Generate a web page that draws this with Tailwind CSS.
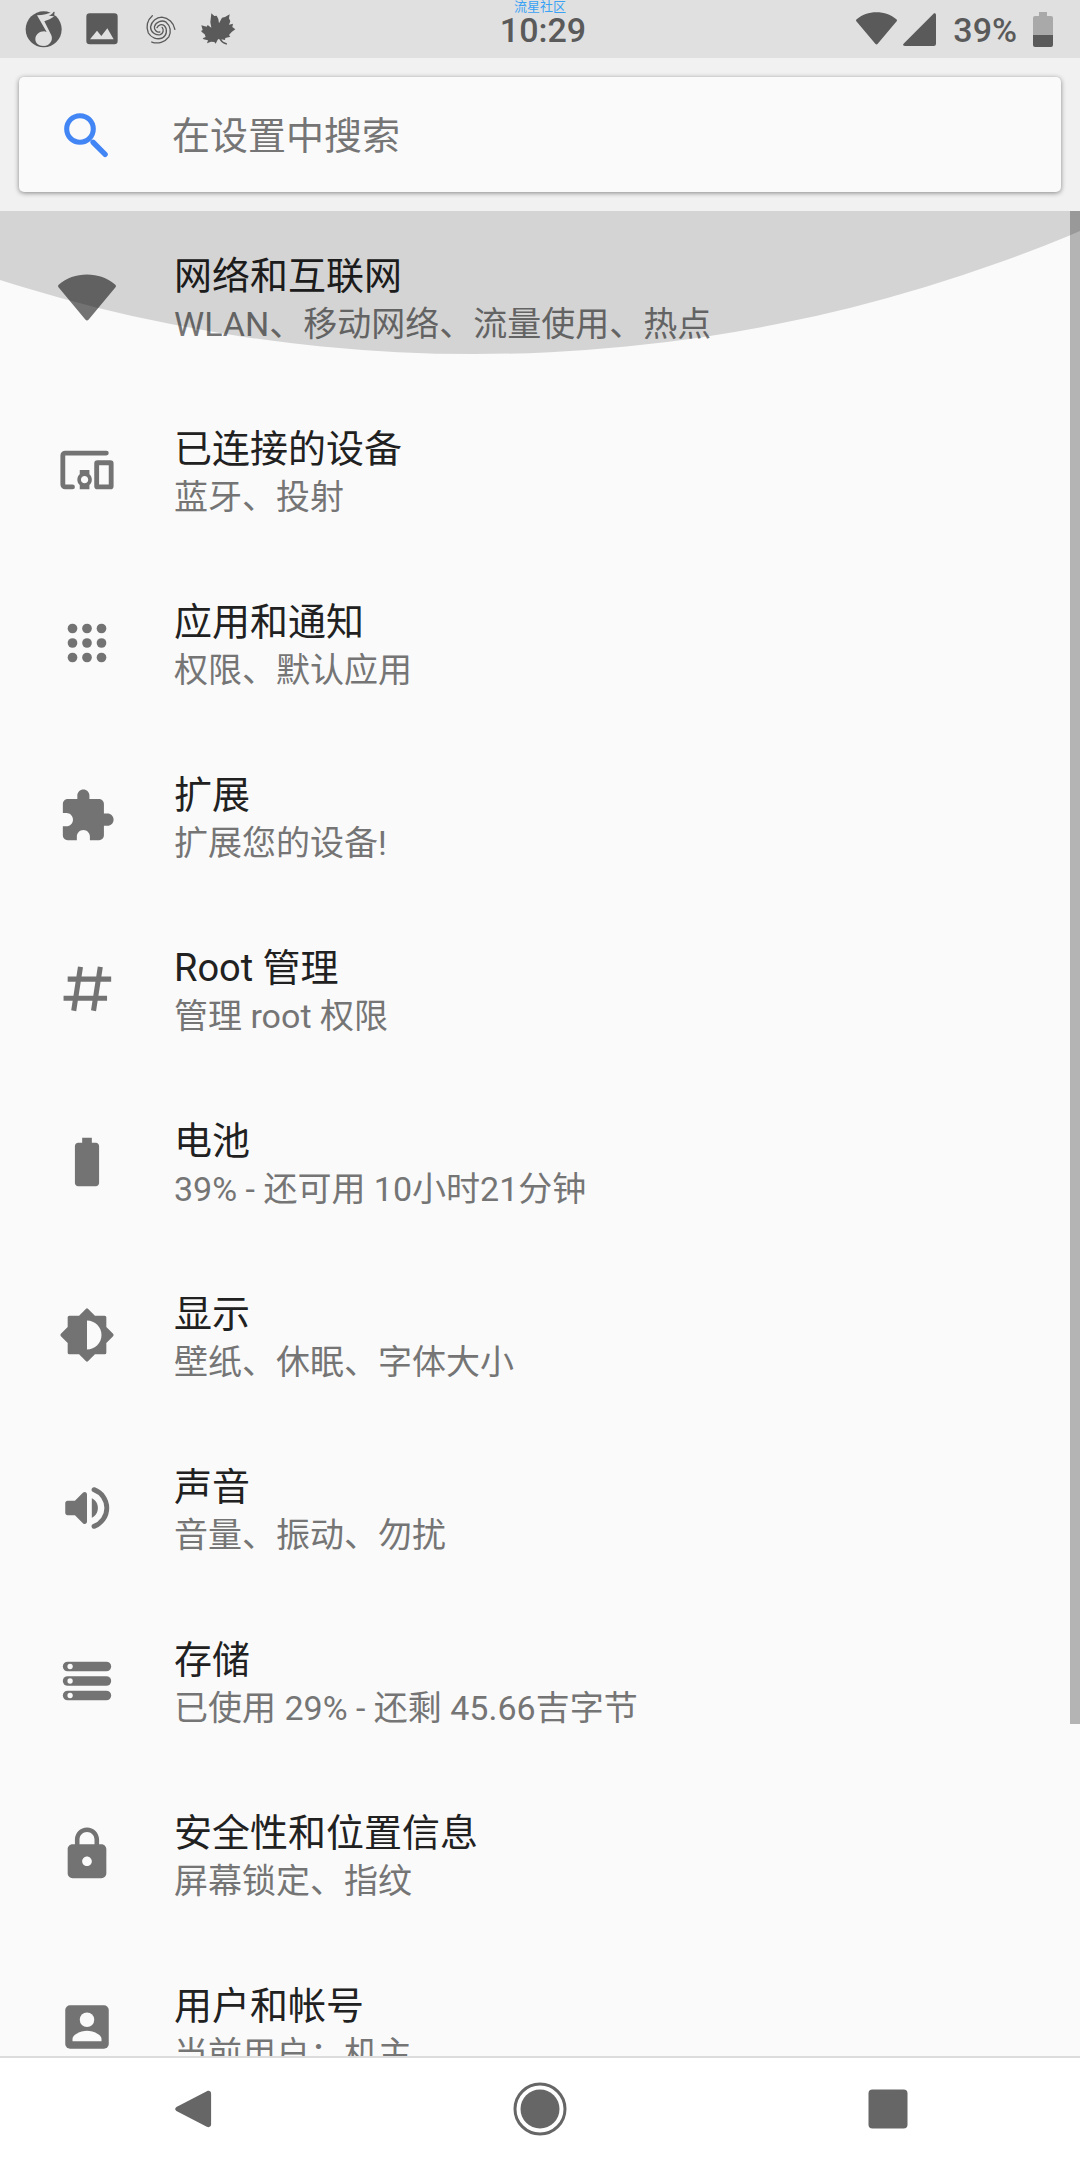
<!DOCTYPE html>
<html lang="zh-CN">
<head>
    <meta charset="UTF-8">
    <meta name="viewport" content="width=device-width, initial-scale=1.0">
    <title>设置</title>
    <script src="https://cdn.jsdelivr.net/npm/@tailwindcss/browser@4"></script>
</head>
<body class="h-screen flex flex-col overflow-hidden bg-[#fafafa] font-['Roboto','Noto_Sans_CJK_SC',sans-serif]">
    <!-- Status bar -->
    <header class="relative grid grid-cols-3 items-center shrink-0 h-[58px] bg-[#e0e0e0] text-[#5a5a5a]">
        <div class="flex pl-[15px]">
            <svg class="size-[58px]" viewBox="45 0 174 174" aria-hidden="true">
                <circle cx="131" cy="88" r="54" fill="#5a5a5a"/>
                <path d="M111 46c18-1 34-3 50-12l2 14c-8 8-20 12-30 16l21 42c6 14-4 32-23 32-16 0-25-9-25-20 0-14 12-24 27-24l7 2z" fill="#e0e0e0"/>
                <path d="M146 47c6-2 11-6 15-12l3 1-2 13z" fill="#5a5a5a"/>
            </svg>
            <svg class="size-[58px]" viewBox="219 0 174 174" aria-hidden="true">
                <rect x="259" y="40" width="94" height="93" rx="10" fill="#5a5a5a"/>
                <path d="M270 118l21-26 13 16 18-23 19 33z" fill="#e0e0e0"/>
            </svg>
            <svg class="size-[58px]" viewBox="393 0 174 174" fill="none" stroke="#5a5a5a" stroke-width="4" stroke-linecap="round" aria-hidden="true">
                <g transform="translate(479 87)">
                    <path id="arm" d="M-8-4A14 14 0 0 1 14-10A24 24 0 0 1 8 27A35 35 0 0 1-34 12A44 44 0 0 1-22-40"/>
                    <use href="#arm" transform="rotate(120)"/>
                    <use href="#arm" transform="rotate(240)"/>
                </g>
            </svg>
            <svg class="size-[58px]" viewBox="567 0 174 174" fill="#5a5a5a" aria-hidden="true">
                <path d="M634 40l9 8 7-1 5 10 2 13 9-17 9-2 14-8-2 12 4 9-4 10 12-3-2 10 9 7-11 8-8 9 4 5-15 4-1 6-11-2c2 6 9 10 17 12l-1 4c-12-3-18-9-23-18l-4 3-6 12-4-5-10-1-12 5 3-9-13-3-3-3 9-4-3-8-6-5-5-5 5-3-4-14 16 4 3-5 11 8-3-16z"/>
            </svg>
        </div>
        <time class="pl-[6px] pt-[2px] text-center text-[34px] leading-[40px] font-medium">10:29</time>
        <div class="flex items-center justify-end pr-[27px]">
            <svg class="size-[41px] mr-[6px]" viewBox="0 0 24 24" fill="#5a5a5a" aria-hidden="true">
                <path d="M.4 6C3.400 3.400 7.600 1.900 12 1.900s8.600 1.500 11.600 4.100a.9.9 0 0 1 .2 1.200L12.700 20.300a.9.9 0 0 1-1.400 0L.2 7.200A.9.9 0 0 1 .4 6z"/>
            </svg>
            <svg class="size-[33px] mr-[17px]" viewBox="0 0 33 33" fill="#5a5a5a" aria-hidden="true">
                <path d="M.8 30.500L30.500.8C31.500-.2 33 .4 33 2v28.500a2.500 2.500 0 0 1-2.500 2.500H2C0 33-.5 31.800.8 30.500z"/>
            </svg>
            <span class="mr-[16px] pt-[2px] text-[34px] leading-[40px] font-medium">39%</span>
            <svg class="w-[20px] h-[35px]" viewBox="0 0 20 35" aria-hidden="true">
                <path d="M6 0h8v4h4a2 2 0 0 1 2 2v17H0V6a2 2 0 0 1 2-2h4z" fill="#a9a9a9"/>
                <path d="M0 23h20v10a2 2 0 0 1-2 2H2a2 2 0 0 1-2-2z" fill="#5a5a5a"/>
            </svg>
        </div>
        <p class="absolute inset-x-0 top-0 text-center text-[13px] leading-[13px] text-[#3aa2f5]">流星社区</p>
    </header>

    <!-- Search -->
    <div class="shrink-0 px-[19px] py-[19px] bg-[#f1f1f1]">
        <label class="flex items-center h-[115px] pl-[39px] rounded-[5px] bg-[#fafafa] shadow-[0_1px_5px_rgba(0,0,0,0.45)]">
            <svg class="shrink-0 size-[58px] mr-[56px]" viewBox="0 0 24 24" fill="none" stroke="#4285f4" stroke-width="2" aria-hidden="true">
                <circle cx="9.100" cy="9.500" r="5.500" stroke-width="2.100"/>
                <path d="M14.500 15l5 5" stroke-width="2.200" stroke-linecap="round"/>
            </svg>
            <input type="search" aria-label="在设置中搜索" placeholder="在设置中搜索"
                   class="flex-1 min-w-0 pt-[2px] text-[38px] leading-[50px] text-[#212121] placeholder:text-[#757575] outline-none">
        </label>
    </div>

    <!-- Settings list -->
    <main class="relative flex-1 min-h-0">
        <ul id="settings" class="h-full overflow-y-auto [scrollbar-width:none]"></ul>
        <!-- Overscroll glow -->
        <svg class="absolute inset-x-0 top-0 w-full h-[143px] pointer-events-none" viewBox="0 0 1080 143" preserveAspectRatio="none" aria-hidden="true">
            <circle cx="474" cy="-1412" r="1555" fill="#000" fill-opacity=".15"/>
        </svg>
        <div class="absolute right-0 top-0 w-[10px] h-[82%] bg-black/28"></div>
    </main>

    <!-- Navigation bar -->
    <nav class="grid grid-cols-3 shrink-0 h-[104px] px-[18px] border-t-2 border-[#dcdcdc] bg-white">
        <button type="button" aria-label="返回" class="flex items-center justify-center">
            <svg class="size-[58px]" viewBox="0 0 58 58" fill="#666">
                <path d="M12.500 25.800L43.500 9.500c2.500-1.300 4.500 0 4.500 2.500v33c0 2.500-2 3.800-4.500 2.500L12.500 31.200c-3-1.500-3-3.900 0-5.400z" transform="translate(2.500 2.500) scale(.95 .93)"/>
            </svg>
        </button>
        <button type="button" aria-label="主屏幕" class="flex items-center justify-center">
            <svg class="size-[58px]" viewBox="0 0 58 58" fill="#666">
                <circle cx="29" cy="29" r="19.500"/>
                <circle cx="29" cy="29" r="25" fill="none" stroke="#666" stroke-width="3"/>
            </svg>
        </button>
        <button type="button" aria-label="最近任务" class="flex items-center justify-center">
            <svg class="size-[58px]" viewBox="0 0 58 58" fill="#666">
                <rect x="9.500" y="9.500" width="39" height="39" rx="4"/>
            </svg>
        </button>
    </nav>

    <script>
        const items = [
            {
                title: '网络和互联网',
                summary: 'WLAN、移动网络、流量使用、热点',
                icon: '<path d="M.4 6.800C3.400 4.200 7.600 2.700 12 2.700s8.600 1.500 11.600 4.100a.9.9 0 0 1 .2 1.200L12.700 21.300a.9.9 0 0 1-1.400 0L.2 8a.9.9 0 0 1 .2-1.200z"/>'
            },
            {
                title: '已连接的设备',
                summary: '蓝牙、投射',
                icon: '<path d="M20 5H3a1 1 0 0 0-1 1v12a1 1 0 0 0 1 1h3" fill="none" stroke="currentColor" stroke-width="2" stroke-linecap="round"/><rect x="16" y="9" width="6" height="10" rx=".3" fill="none" stroke="currentColor" stroke-width="2" stroke-linejoin="round"/><path d="M13 12H9v1.780c-.61.55-1 1.330-1 2.220s.39 1.670 1 2.220V20h4v-1.780c.61-.55 1-1.340 1-2.220s-.39-1.670-1-2.220V12zm-2 5.500c-.83 0-1.500-.67-1.500-1.500s.67-1.500 1.500-1.500 1.500.67 1.500 1.500-.67 1.500-1.500 1.500z"/>'
            },
            {
                title: '应用和通知',
                summary: '权限、默认应用',
                icon: '<circle cx="6" cy="6" r="2"/><circle cx="12" cy="6" r="2"/><circle cx="18" cy="6" r="2"/><circle cx="6" cy="12" r="2"/><circle cx="12" cy="12" r="2"/><circle cx="18" cy="12" r="2"/><circle cx="6" cy="18" r="2"/><circle cx="12" cy="18" r="2"/><circle cx="18" cy="18" r="2"/>'
            },
            {
                title: '扩展',
                summary: '扩展您的设备!',
                icon: '<path d="M20.500 11H19V7c0-1.100-.9-2-2-2h-4V3.500C13 2.120 11.880 1 10.500 1S8 2.120 8 3.500V5H4c-1.100 0-1.990.9-1.990 2v3.800H3.500c1.490 0 2.700 1.210 2.700 2.700s-1.210 2.700-2.700 2.700H2V20c0 1.100.9 2 2 2h3.800v-1.500c0-1.490 1.210-2.700 2.700-2.700 1.490 0 2.700 1.210 2.700 2.700V22H17c1.100 0 2-.9 2-2v-4h1.500c1.380 0 2.500-1.120 2.500-2.500S21.880 11 20.500 11z"/>'
            },
            {
                title: 'Root 管理',
                summary: '管理 root 权限',
                icon: '<path d="M9.300 2.800L6.500 21M17.500 2.800L14.700 21M4 7.900h18M2.300 15.800h18" fill="none" stroke="currentColor" stroke-width="2.100"/>'
            },
            {
                title: '电池',
                summary: '39% - 还可用 10小时21分钟',
                icon: '<path d="M15.670 4H14V2h-4v2H8.330C7.600 4 7 4.600 7 5.330v15.330C7 21.400 7.600 22 8.330 22h7.330c.74 0 1.340-.6 1.340-1.330V5.330C17 4.600 16.400 4 15.670 4z"/>'
            },
            {
                title: '显示',
                summary: '壁纸、休眠、字体大小',
                icon: '<path d="M19.300 15L22.300 12l-3-3V4.700H15L12 1.700l-3 3H4.700V9l-3 3 3 3v4.300H9l3 3 3-3h4.300z" stroke="currentColor" stroke-width="1.400" stroke-linejoin="round"/><path d="M12 18V6c3.310 0 6 2.690 6 6s-2.690 6-6 6z" fill="#fafafa"/>'
            },
            {
                title: '声音',
                summary: '音量、振动、勿扰',
                icon: '<path d="M4 9h3l3.300-3.300c.7-.7 1.700-.3 1.700.7v11.200c0 1-1 1.400-1.700.7L7 15H4c-.6 0-1-.4-1-1v-4c0-.6.400-1 1-1z"/><path d="M16.500 12c0-1.770-.9-3.290-2.500-4.030v8.050c1.600-.73 2.500-2.250 2.500-4.020z"/><path d="M14.900 4.400a8.100 8.100 0 0 1 0 15.200" fill="none" stroke="currentColor" stroke-width="2" stroke-linecap="round"/>'
            },
            {
                title: '存储',
                summary: '已使用 29% - 还剩 45.66吉字节',
                icon: '<rect x="2" y="4" width="20" height="4" rx="2"/><rect x="2" y="10" width="20" height="4" rx="2"/><rect x="2" y="16" width="20" height="4" rx="2"/><g fill="#fafafa"><circle cx="5" cy="6" r="1.100"/><circle cx="5" cy="12" r="1.100"/><circle cx="5" cy="18" r="1.100"/></g>'
            },
            {
                title: '安全性和位置信息',
                summary: '屏幕锁定、指纹',
                icon: '<path d="M18 8h-1V6c0-2.760-2.240-5-5-5S7 3.240 7 6v2H6c-1.100 0-2 .9-2 2v10c0 1.100.9 2 2 2h12c1.100 0 2-.9 2-2V10c0-1.100-.9-2-2-2zm-6 9c-1.100 0-2-.9-2-2s.9-2 2-2 2 .9 2 2-.9 2-2 2zm3.100-9H8.900V6c0-1.710 1.390-3.100 3.100-3.100 1.710 0 3.100 1.390 3.100 3.100v2z"/>'
            },
            {
                title: '用户和帐号',
                summary: '当前用户：机主',
                icon: '<rect x="3" y="3" width="18" height="18" rx="2"/><g fill="#fafafa"><circle cx="12" cy="9" r="3"/><path d="M6 17.900v-.9c0-2.200 4-3.400 6-3.400s6 1.200 6 3.400v.9z"/></g>'
            }
        ];

        const list = document.getElementById('settings');

        items.forEach(item => {
            const row = document.createElement('li');
            row.innerHTML = `
                <a href="#" class="flex items-center h-[173px] pb-px pl-[58px] pr-[40px]">
                    <svg class="shrink-0 size-[58px] mr-[58px] text-[#737373]" viewBox="0 0 24 24" fill="currentColor" aria-hidden="true">${item.icon}</svg>
                    <div class="min-w-0 pt-[4px] whitespace-nowrap">
                        <h2 class="text-[38px] leading-[50px] text-[#212121]">${item.title}</h2>
                        <p class="text-[34px] leading-[46px] text-[#757575]">${item.summary}</p>
                    </div>
                </a>
            `;
            list.appendChild(row);
        });
    </script>
</body>
</html>
